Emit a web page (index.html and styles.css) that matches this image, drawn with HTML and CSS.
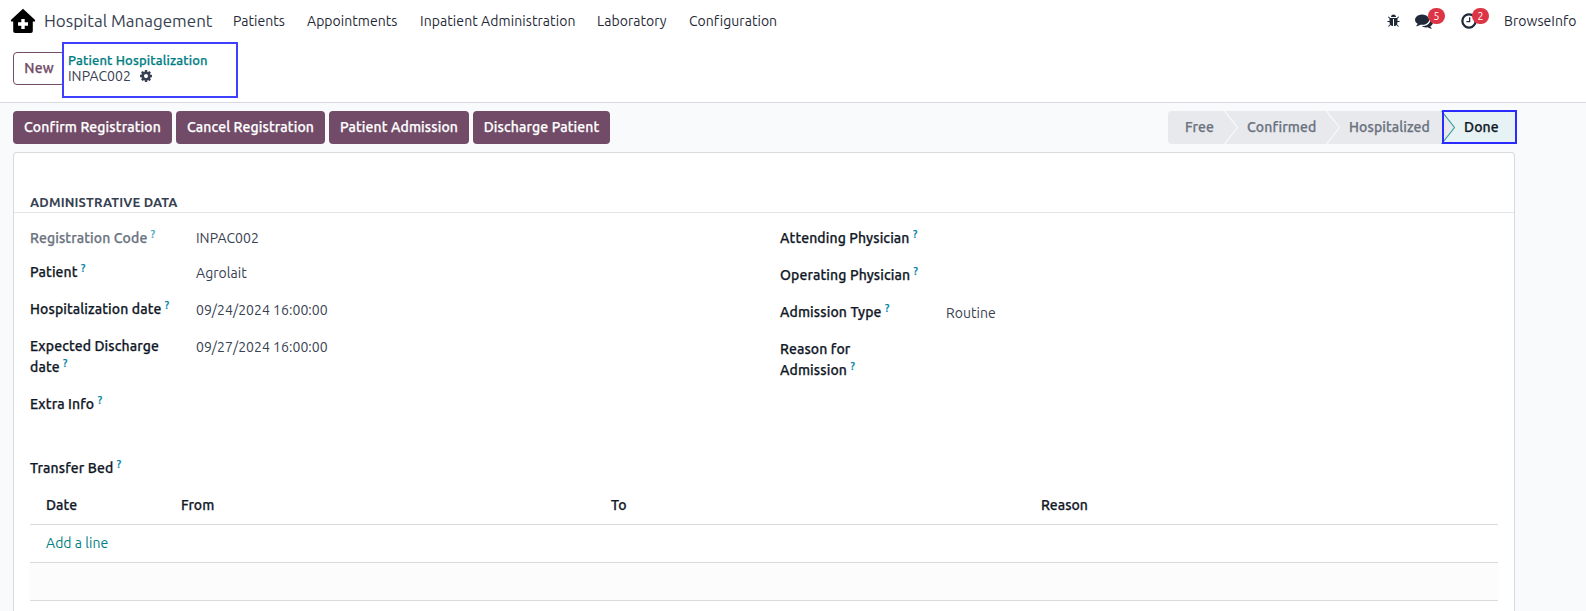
FILE: index.html
```html
<!DOCTYPE html>
<html lang="en">
<head>
<meta charset="utf-8">
<title>Patient Hospitalization</title>
<link rel="stylesheet" href="styles.css">
</head>
<body>
<header class="navbar">
  <svg class="brand-icon" viewBox="0 0 26 26"><path d="M13 .8 24.600 11.500Q26 13.400 24 13.600h-1.200V23q0 2-2 2H5.200q-2 0-2-2v-9.400H2Q0 13.400 1.400 11.500Z"/><path d="M11.300 11h3.400v3.300H18v3.400h-3.300V21h-3.400v-3.300H8v-3.400h3.300z" fill="#fff"/></svg>
  <span class="brand">Hospital Management</span>
  <nav class="menu">
    <span class="m-patients">Patients</span>
    <span class="m-appointments">Appointments</span>
    <span class="m-inpatient">Inpatient Administration</span>
    <span class="m-laboratory">Laboratory</span>
    <span class="m-configuration">Configuration</span>
  </nav>
  <div class="systray">
    <svg class="icon bug" viewBox="0 0 1792 1792"><path d="M1632 960q0 26-19 45t-45 19h-224q0 171-67 290l208 209q19 19 19 45t-19 45q-18 19-45 19t-45-19l-198-197q-5 5-15 13t-42 28.500-65 36.500-82 29-97 13v-896h-128v896q-51 0-101.500-13.500t-87-33-66-39-43.500-32.500l-15-14-183 207q-20 21-48 21-24 0-43-16-19-18-20.500-44.500t15.500-46.500l202-227q-58-114-58-274h-224q-26 0-45-19t-19-45 19-45 45-19h224v-294l-173-173q-19-19-19-45t19-45 45-19 45 19l173 173h844l173-173q19-19 45-19t45 19 19 45-19 45l-173 173v294h224q26 0 45 19t19 45zm-480-576h-640q0-133 93.500-226.500t226.500-93.500 226.500 93.500 93.500 226.500z"/></svg>
    <span class="tray-item chat"><svg class="icon" viewBox="0 0 1792 1792"><path d="M1408 768q0 139-94 257t-256.500 186.500-353.500 68.500q-86 0-176-16-124 88-278 128-36 9-86 16h-3q-11 0-20.500-8t-11.500-21q-1-3-1-6.500t.5-6.500 2-6l2.500-5 3.500-5.500 4-5 4.500-5 4-4.500q5-6 23-25t26-29.500 22.500-29 25-38.500 20.500-44q-124-72-195-177t-71-224q0-139 94-257t256.500-186.500 353.500-68.500 353.500 68.500 256.500 186.500 94 257zm384 256q0 120-71 224.500t-195 176.500q10 24 20.500 44t25 38.500 22.500 29 26 29.500 23 25q1 1 4 4.500t4.500 5 4 5 3.500 5.500l2.500 5 2 6 .5 6.500-1 6.500q-3 14-13 22t-22 7q-50-7-86-16-154-40-278-128-90 16-176 16-271 0-472-132 58 4 88 4 161 0 309-45t264-129q125-92 192-212t67-254q0-77-23-152 129 71 204 178t75 230z"/></svg><span class="badge">5</span></span>
    <span class="tray-item clock"><svg class="icon" viewBox="0 0 1792 1792"><path d="M1024 544v448q0 14-9 23t-23 9h-320q-14 0-23-9t-9-23v-64q0-14 9-23t23-9h224v-352q0-14 9-23t23-9h64q14 0 23 9t9 23zm416 352q0-148-73-273t-198-198-273-73-273 73-198 198-73 273 73 273 198 198 273 73 273-73 198-198 73-273zm224 0q0 209-103 385.500t-279.500 279.500-385.500 103-385.500-103-279.500-279.500-103-385.500 103-385.500 279.500-279.500 385.500-103 385.500 103 279.500 279.500 103 385.500z"/></svg><span class="badge">2</span></span>
    <span class="user">BrowseInfo</span>
  </div>
</header>

<section class="control-panel">
  <button class="btn-new">New</button>
  <div class="breadcrumb">
    <a class="crumb-parent">Patient Hospitalization</a>
    <div class="crumb-current"><span>INPAC002</span>
      <svg class="icon cog" viewBox="0 0 1792 1792"><path d="M1152 896q0-106-75-181t-181-75-181 75-75 181 75 181 181 75 181-75 75-181zm512-109v222q0 12-8 23t-20 13l-185 28q-19 54-39 91 35 50 107 138 10 12 10 25t-9 23q-27 37-99 108t-94 71q-12 0-26-9l-138-108q-44 23-91 38-16 136-29 186-7 28-36 28h-222q-14 0-24.500-8.500t-11.500-21.500l-28-184q-49-16-90-37l-141 107q-10 9-25 9-14 0-25-11-126-114-165-168-7-10-7-23 0-12 8-23 15-21 51-66.500t54-70.500q-27-50-41-99l-183-27q-13-2-21-12.500t-8-23.500v-222q0-12 8-23t19-13l186-28q14-46 39-92-40-57-107-138-10-12-10-24 0-10 9-23 26-36 98.500-107.500t94.500-71.500q13 0 26 10l138 107q44-23 91-38 16-136 29-186 7-28 36-28h222q14 0 24.500 8.500t11.500 21.500l28 184q49 16 90 37l142-107q9-9 24-9 13 0 25 10 129 119 165 170 7 8 7 22 0 12-8 23-15 21-51 66.500t-54 70.500q26 50 41 98l183 28q13 2 21 12.500t8 23.500z"/></svg>
    </div>
  </div>
</section>

<main class="content">
  <div class="statusbar">
    <div class="actions">
      <button class="btn b-confirm">Confirm Registration</button>
      <button class="btn b-cancel">Cancel Registration</button>
      <button class="btn b-admission">Patient Admission</button>
      <button class="btn b-discharge">Discharge Patient</button>
    </div>
    <div class="stages">
      <span class="stage s-free">Free</span>
      <svg class="chevron" viewBox="0 0 14 33"><path d="M.5 0 13.500 16.500.5 33"/></svg>
      <span class="stage s-confirmed">Confirmed</span>
      <svg class="chevron" viewBox="0 0 14 33"><path d="M.5 0 13.500 16.500.5 33"/></svg>
      <span class="stage s-hospitalized">Hospitalized</span>
      <svg class="chevron last" viewBox="0 0 14 33"><path class="fill" d="M0 0H14V33H0L13 16.500Z"/><path class="edge" d="M.5 0 13.500 16.500.5 33"/></svg>
      <span class="stage s-done">Done</span>
      <i class="highlight"></i>
    </div>
  </div>

  <div class="sheet">
    <h2 class="section-title"><span>ADMINISTRATIVE DATA</span></h2>
    <div class="groups">
      <div class="group left">
        <label class="label readonly">Registration Code <sup>?</sup></label><span class="value">INPAC002</span>
        <label class="label">Patient <sup>?</sup></label><span class="value down">Agrolait</span>
        <label class="label">Hospitalization date <sup>?</sup></label><span class="value down">09/24/2024 16:00:00</span>
        <label class="label">Expected Discharge<br>date <sup>?</sup></label><span class="value down">09/27/2024 16:00:00</span>
        <label class="label">Extra Info <sup>?</sup></label><span class="value"></span>
      </div>
      <div class="group right">
        <label class="label">Attending Physician <sup>?</sup></label><span class="value"></span>
        <label class="label">Operating Physician <sup>?</sup></label><span class="value"></span>
        <label class="label">Admission Type <sup>?</sup></label><span class="value down">Routine</span>
        <label class="label">Reason for<br>Admission <sup>?</sup></label><span class="value"></span>
      </div>
    </div>
    <label class="label transfer">Transfer Bed <sup>?</sup></label>
    <div class="table">
      <div class="row head"><span>Date</span><span>From</span><span>To</span><span>Reason</span></div>
      <div class="row"><a class="add-line">Add a line</a></div>
      <div class="row striped"></div>
    </div>
  </div>
</main>
</body>
</html>
```
FILE: styles.css
```css
* { box-sizing: border-box; }
body {
  margin: 0;
  height: 611px;
  overflow: hidden;
  display: flex;
  flex-direction: column;
  background: #fff;
  color: #374151;
  font: 14px/21px Ubuntu, "Noto Sans", sans-serif;
  letter-spacing: .04px;
}
button { font: inherit; letter-spacing: inherit; padding: 0; margin: 0; }
.icon { display: block; fill: #1f2937; }

/* Medium-weight text */
.btn-new, .crumb-parent, .btn, .stages, .label, .head {
  font-weight: 500;
  letter-spacing: .12px;
  -webkit-text-stroke: .25px currentColor;
}

.navbar { display: flex; align-items: center; height: 42px; padding: 0 8px 0 10px; white-space: nowrap; flex: none; }
.brand-icon { width: 26px; height: 26px; }
.brand { width: 167px; margin: -1px 0 0 8px; font-size: 17px; letter-spacing: 0; }
.menu { display: flex; gap: 22px; margin-left: 22px; color: #1f2937; }
.m-patients { width: 52px; }
.m-appointments { width: 91px; }
.m-inpatient { width: 155px; letter-spacing: .08px; }
.m-laboratory { width: 70px; }
.systray { display: flex; align-items: center; margin-left: auto; color: #1f2937; }
.bug { width: 14px; height: 14px; margin-right: 14px; }
.tray-item { position: relative; }
.tray-item .icon { width: 18px; height: 18px; }
.chat { margin-right: 27px; }
.clock { margin-right: 26px; }
.badge {
  position: absolute; left: 13px; top: -4px; width: 17px; height: 16px;
  border-radius: 8px; background: #dc3545; color: #fff;
  font-size: 10.500px; line-height: 16px; text-align: center;
}
.clock .badge { left: 12px; }
.user { width: 74px; }

.control-panel { display: flex; align-items: flex-start; height: 61px; padding: 0 13px; border-bottom: 1px solid #d8dadd; flex: none; }
.btn-new {
  width: 52px; height: 33px; margin-top: 10px; background: #fff;
  border: 1px solid #714b67; border-radius: 4px; color: #714b67;
}
.breadcrumb {
  width: 176px; height: 56px; margin-left: -3px; padding: 8px 0 0 4px;
  border: 2px solid #3f3fff; background: #fff; position: relative; line-height: 16px;
}
.crumb-parent { display: block; color: #017e84; font-size: 13px; letter-spacing: .15px; }
.crumb-current { display: flex; align-items: center; gap: 8px; }
.cog { width: 14px; height: 14px; fill: #374151; }

.content { flex: 1; min-height: 0; display: flex; flex-direction: column; padding: 8px 71px 0 13px; background: #f9fafb; }
.statusbar { display: flex; justify-content: space-between; height: 33px; margin-right: -1px; flex: none; }
.actions { display: flex; gap: 4px; }
.btn { height: 33px; border: 0; border-radius: 4px; background: #714b67; color: #fff; white-space: nowrap; }
.b-confirm { width: 159px; }
.b-cancel { width: 149px; }
.b-admission { width: 140px; }
.b-discharge { width: 137px; }

.stages { position: relative; display: flex; height: 33px; border-radius: 4px; background: #e7e9ed; line-height: 33px; color: #6b7280; white-space: nowrap; }
.stage { display: block; }
.s-free { width: 56px; padding-left: 17px; }
.s-confirmed { width: 88px; padding-left: 9px; }
.s-hospitalized { width: 101px; padding-left: 9px; }
.s-done { width: 61px; padding-left: 9px; background: #e6f2f3; color: #111827; }
.chevron { width: 14px; height: 33px; fill: none; stroke: #f9fafb; stroke-width: 1.2; }
.chevron .fill { fill: #e6f2f3; stroke: none; }
.chevron .edge { stroke: #3b9a9e; }
.highlight { position: absolute; left: 274px; top: -1px; width: 75px; height: 34px; border: 2px solid #2b2bff; }

.sheet { flex: 1; margin-top: 8px; border: 1px solid #d8dadd; border-bottom: 0; border-radius: 4px 4px 0 0; background: #fff; }
.section-title { margin: 0; padding: 39px 16px 0; height: 60px; border-bottom: 1px solid #e3e4e7; font-size: 13px; line-height: 20px; font-weight: 700; letter-spacing: .15px; }
.groups { display: grid; grid-template-columns: 750px 1fr; padding: 15px 16px 0; height: 245px; }
.group { display: grid; grid-template-columns: 166px 1fr; align-content: start; white-space: nowrap; }
.left { grid-template-rows: 34px 37px 37px 58px 21px; }
.right { grid-template-rows: 37px 37px 37px 42px; }
.label { color: #111827; }
.readonly { color: #6b7280; }
.readonly sup { opacity: .7; }
sup { color: #0180a5; font-size: 10.500px; line-height: 0; vertical-align: 5px; }
.down { padding-top: 1px; }
.transfer { display: block; margin-left: 16px; height: 29px; }
.table { margin: 0 16px; }
.row { display: grid; grid-template-columns: 135px 430px 430px 1fr; height: 38px; padding: 8px 16px 0; border-bottom: 1px solid #d8dadd; }
.head { color: #111827; letter-spacing: .04px; }
.striped { background: #fcfcfc; }
.add-line { color: #017e84; }
```
